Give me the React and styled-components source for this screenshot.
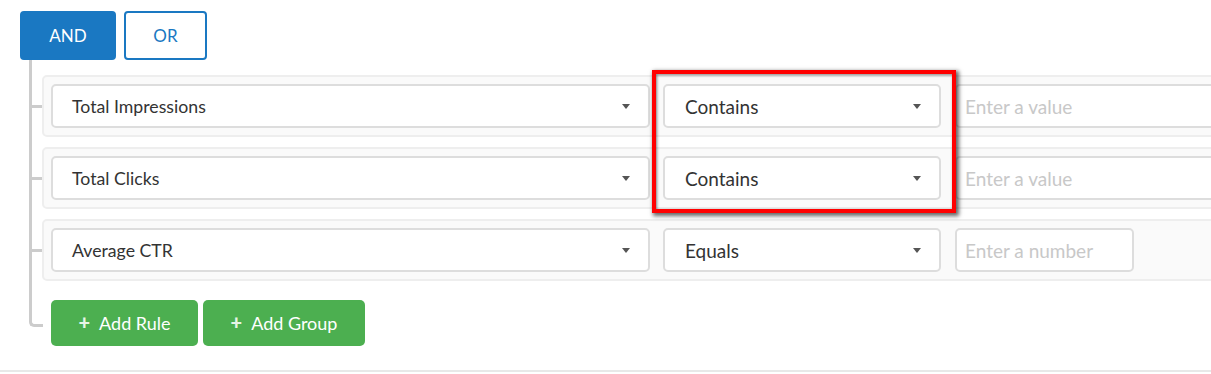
import React from 'react';
import styled, { createGlobalStyle } from 'styled-components';

const GlobalStyle = createGlobalStyle`
  html, body {
    margin: 0;
    padding: 0;
    background: #fff;
    overflow: hidden;
  }
  body {
    font-family: Lato, "Open Sans", "Liberation Sans", sans-serif;
    color: #333;
  }
`;

const Page = styled.div`
  position: relative;
  width: 1211px;
  height: 372px;
  padding: 11px 0 0 20px;
  box-sizing: border-box;
  border-bottom: 2px solid #e8e8e8;
  overflow: hidden;
`;

const Conjunctions = styled.div`
  display: flex;
  gap: 8px;
`;

const ConjButton = styled.button`
  height: 49px;
  width: ${p => p.$w}px;
  border-radius: 4px;
  font-family: inherit;
  font-size: 17px;
  box-sizing: border-box;
  border: 2px solid #1a78c2;
  background: ${p => (p.$active ? '#1a78c2' : '#fff')};
  color: ${p => (p.$active ? '#fff' : '#1a78c2')};
  padding: 0;
`;

const Tree = styled.div`
  margin-left: 9px;
  display: flex;
  flex-direction: column;
`;

const Branch = styled.div`
  display: flex;
  align-items: flex-end;
  border-left: 3px solid #ccc;
  padding-top: ${p => p.$gap}px;
`;

const Connector = styled.div`
  width: 10px;
  height: 3px;
  background: #ccc;
  align-self: center;
  margin-top: ${p => p.$gap}px;
  flex-shrink: 0;
`;

const Rule = styled.div`
  display: flex;
  align-items: center;
  gap: 13px;
  width: 1200px;
  flex-shrink: 0;
  padding: 7px;
  background: #fafafa;
  border: 2px solid #eeeeee;
  border-radius: 5px;
`;

const Select = styled.div`
  display: flex;
  align-items: center;
  justify-content: space-between;
  width: ${p => p.$w}px;
  height: 44px;
  box-sizing: border-box;
  padding: 0 18px 0 ${p => (p.$big ? 20 : 19)}px;
  background: #fff;
  border: 2px solid #ddd;
  border-radius: 5px;
  font-size: ${p => (p.$big ? 19 : 17.7)}px;
  color: #333;
  flex-shrink: 0;
`;

const Caret = styled.span`
  width: 0;
  height: 0;
  border-left: 4.5px solid transparent;
  border-right: 4.5px solid transparent;
  border-top: 5px solid #555;
  margin-top: 1px;
`;

const ValueInput = styled.div`
  display: flex;
  align-items: center;
  width: ${p => p.$w}px;
  height: 44px;
  box-sizing: border-box;
  padding: 0 8px;
  margin-left: 1px;
  background: #fff;
  border: 2px solid #ddd;
  border-radius: 5px;
  font-size: 19px;
  color: #c8c8c8;
  flex-shrink: 0;
`;

const ActionBranch = styled.div`
  display: flex;
  align-items: flex-start;
`;

const Elbow = styled.div`
  width: 11px;
  height: 43px;
  border-left: 3px solid #ccc;
  border-bottom: 3px solid #ccc;
  border-bottom-left-radius: 5px;
  box-sizing: content-box;
  flex-shrink: 0;
`;

const Actions = styled.div`
  display: flex;
  gap: 5px;
  margin-top: 19px;
  margin-left: 8px;
`;

const GreenButton = styled.button`
  display: flex;
  align-items: center;
  justify-content: center;
  gap: 9px;
  width: ${p => p.$w}px;
  height: 46px;
  border: none;
  border-radius: 5px;
  background: #4caf50;
  color: #fff;
  font-family: inherit;
  font-size: 18px;
  padding: 0;
`;

const Plus = styled.span`
  font-weight: 900;
  font-size: 20px;
  color: #e6f4e6;
  margin-top: -2px;
`;

const Highlight = styled.div`
  position: absolute;
  left: 652px;
  top: 70px;
  width: 304px;
  height: 143px;
  box-sizing: border-box;
  border: 4px solid #ff0000;
  box-shadow: 2px 2px 4px 1px rgba(0, 0, 0, 0.6), inset 1px 1px 3px rgba(0, 0, 0, 0.5);
  pointer-events: none;
`;

const rules = [
  { field: 'Total Impressions', op: 'Contains', placeholder: 'Enter a value', w: 320 },
  { field: 'Total Clicks', op: 'Contains', placeholder: 'Enter a value', w: 320 },
  { field: 'Average CTR', op: 'Equals', placeholder: 'Enter a number', w: 179 },
];

const App = () => {
  return (
    <Page>
      <GlobalStyle />
      <Conjunctions>
        <ConjButton $active $w={96}>AND</ConjButton>
        <ConjButton $w={83}>OR</ConjButton>
      </Conjunctions>
      <Tree>
        {rules.map((r, i) => (
          <Branch key={r.field} $gap={i === 0 ? 15 : 10}>
            <Connector />
            <Rule>
              <Select $w={599}>
                {r.field}
                <Caret />
              </Select>
              <Select $w={278} $big>
                {r.op}
                <Caret />
              </Select>
              <ValueInput $w={r.w}>{r.placeholder}</ValueInput>
            </Rule>
          </Branch>
        ))}
        <ActionBranch>
          <Elbow />
          <Actions>
            <GreenButton $w={147}>
              <Plus>+</Plus>Add Rule
            </GreenButton>
            <GreenButton $w={162}>
              <Plus>+</Plus>Add Group
            </GreenButton>
          </Actions>
        </ActionBranch>
      </Tree>
      <Highlight />
    </Page>
  );
};

export default App;
